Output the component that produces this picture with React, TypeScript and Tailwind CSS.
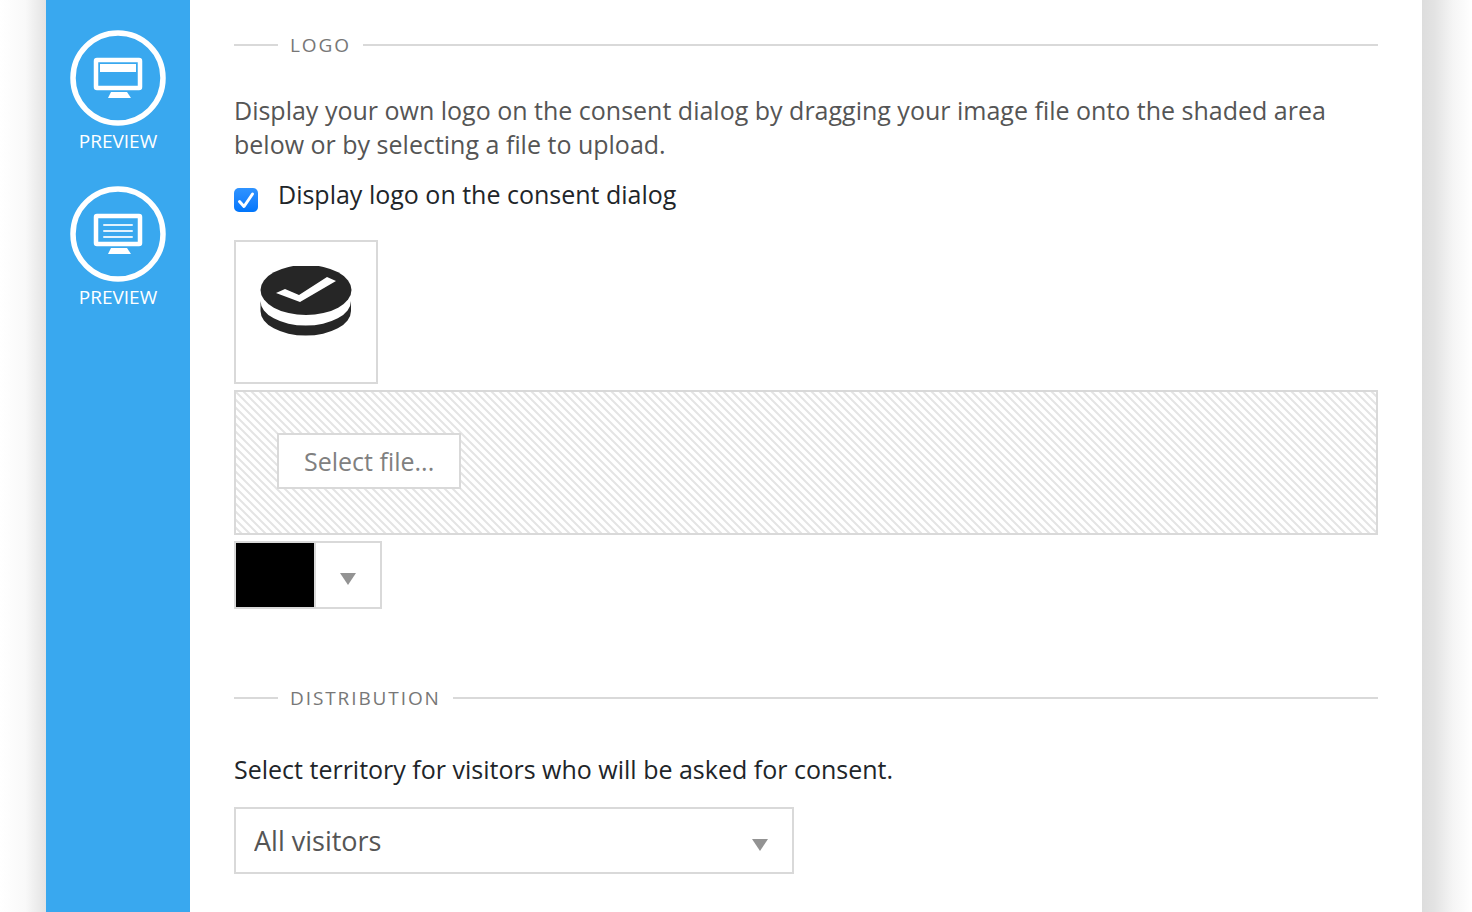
import { useState } from 'react';
import type { ReactNode } from 'react';

const PreviewIcon = ({ children }: { children: ReactNode }) => (
  <svg viewBox="0 0 96 96" className="size-24" fill="none" aria-hidden="true">
    <circle cx="48" cy="48" r="45" stroke="white" strokeWidth="5.5" />
    <rect x="26" y="30" width="44" height="28" rx="1" stroke="white" strokeWidth="4.5" />
    <path d="M41 62h16l4 6H38z" fill="white" />
    {children}
  </svg>
);

const previews = [
  {
    id: 'dialog',
    icon: <path d="M30 34h36v8H30z" fill="white" />
  },
  {
    id: 'text',
    icon: <path d="M34 39h28M34 45h28M34 51h28" stroke="white" strokeOpacity="0.85" strokeWidth="2" strokeLinecap="round" />
  }
];

const SectionTitle = ({ title }: { title: string }) => (
  <div className="flex items-center">
    <span className="h-0.5 w-11 bg-[#d9d9d9]" />
    <h2 className="px-3 text-[19px] leading-6 tracking-widest uppercase text-[#777]">{title}</h2>
    <span className="h-0.5 flex-1 bg-[#d9d9d9]" />
  </div>
);

const Arrow = () => (
  <svg viewBox="0 0 16 12" className="h-3 w-4" fill="#939393" aria-hidden="true">
    <path d="M0 0h16L8 12z" />
  </svg>
);

const ConsentLogo = () => (
  <svg viewBox="0 0 92 72" className="h-[72px] w-[92px]" aria-label="Consent logo" role="img">
    <ellipse cx="46" cy="24" rx="45.5" ry="25" fill="#262626" />
    <path d="M.5 35A45.25 24.5 0 0 0 91 35V45A45.25 24.5 0 0 1 .5 45z" fill="#262626" />
    <path d="M16 27l9-4 14 6 28-18 9 4-36 21z" fill="white" />
  </svg>
);

// Diagonal hatching behind the drop area
const Hatching = () => (
  <svg className="pointer-events-none absolute inset-0 size-full" aria-hidden="true">
    <defs>
      <pattern id="hatching" width="8" height="8" patternUnits="userSpaceOnUse">
        <path d="M-8 -8l24 24M0 -8l16 16M-8 0l16 16" stroke="#e4e4e4" strokeWidth="2" />
      </pattern>
    </defs>
    <rect width="100%" height="100%" fill="url(#hatching)" />
  </svg>
);

const App = () => {
  const [showLogo, setShowLogo] = useState(true);
  const [territory, setTerritory] = useState('all');

  return (
    <div className="flex min-h-screen bg-white font-['Open_Sans','Noto_Sans',sans-serif] text-[#212529]">
      {/* Left shadow */}
      <div className="w-[46px] shrink-0 bg-linear-to-r from-white via-[#f9f9f9] via-55% to-[#e3e3e3]" />

      {/* Sidebar */}
      <nav className="flex w-36 shrink-0 flex-col items-center gap-[30px] bg-[#39a8ef] pt-[30px]">
        {previews.map((preview) => (
          <button key={preview.id} type="button" className="flex flex-col items-center text-[19px] leading-[30px] text-white">
            <PreviewIcon>{preview.icon}</PreviewIcon>
            <span>PREVIEW</span>
          </button>
        ))}
      </nav>

      {/* Settings */}
      <main className="min-w-0 flex-1 px-11 pt-[33px]">
        <section>
          <SectionTitle title="Logo" />
          <p className="mt-9 text-[25px] leading-[34px] text-[#555]">
            Display your own logo on the consent dialog by dragging your image file onto the shaded area below or by selecting a file to upload.
          </p>
          <label className="mt-4 flex gap-5 text-[25px] leading-[34px]">
            <span className="relative mt-[11px] size-6 shrink-0">
              <input
                type="checkbox"
                checked={showLogo}
                onChange={(e) => setShowLogo(e.target.checked)}
                className="peer block size-6 appearance-none rounded-[5px] border border-[#999] bg-white checked:border-0 checked:bg-linear-to-b checked:from-[#2e93ff] checked:to-[#0075fb]"
              />
              <svg viewBox="0 0 24 24" className="pointer-events-none absolute inset-0 hidden size-6 peer-checked:block" fill="none" aria-hidden="true">
                <path d="M5.5 13.5l4.5 5L18.5 6" stroke="white" strokeWidth="3" strokeLinecap="round" strokeLinejoin="round" />
              </svg>
            </span>
            Display logo on the consent dialog
          </label>

          <div className="mt-7 flex size-36 justify-center border-2 border-[#d9d9d9] pt-6">
            <ConsentLogo />
          </div>

          <div className="relative mt-1.5 border-2 border-[#d9d9d9] px-[41px] pt-[41px] pb-11">
            <Hatching />
            <button type="button" className="relative block h-14 border-2 border-[#d9d9d9] bg-white px-[25px] text-[25px] leading-[34px] text-[#808080]">
              Select file...
            </button>
          </div>

          <button type="button" aria-label="Background color" className="mt-1.5 flex h-[68px] w-[148px] border-2 border-[#d9d9d9]">
            <span className="h-full w-20 border-r-2 border-[#d9d9d9] bg-black" />
            <span className="flex h-full flex-1 items-center justify-center pt-2">
              <Arrow />
            </span>
          </button>
        </section>

        <section className="mt-[77px]">
          <SectionTitle title="Distribution" />
          <label htmlFor="territory" className="mt-[42px] block text-[25px] leading-[34px]">
            Select territory for visitors who will be asked for consent.
          </label>
          <div className="mt-[21px] grid max-w-[560px] items-center">
            <select
              id="territory"
              value={territory}
              onChange={(e) => setTerritory(e.target.value)}
              className="col-start-1 row-start-1 h-[67px] w-full appearance-none border-2 border-[#d9d9d9] bg-white px-[18px] pt-0.5 text-[27px] text-[#555]"
            >
              <option value="all">All visitors</option>
              <option value="eu">EU visitors only</option>
            </select>
            <span className="pointer-events-none col-start-1 row-start-1 mr-[26px] justify-self-end pt-2">
              <Arrow />
            </span>
          </div>
        </section>
      </main>

      {/* Right shadow */}
      <div className="w-[50px] shrink-0 bg-[linear-gradient(to_right,#dddddd_0%,#e3e3e3_25%,#f5f5f5_62%,#ffffff_100%)]" />
    </div>
  );
};

export default App;
